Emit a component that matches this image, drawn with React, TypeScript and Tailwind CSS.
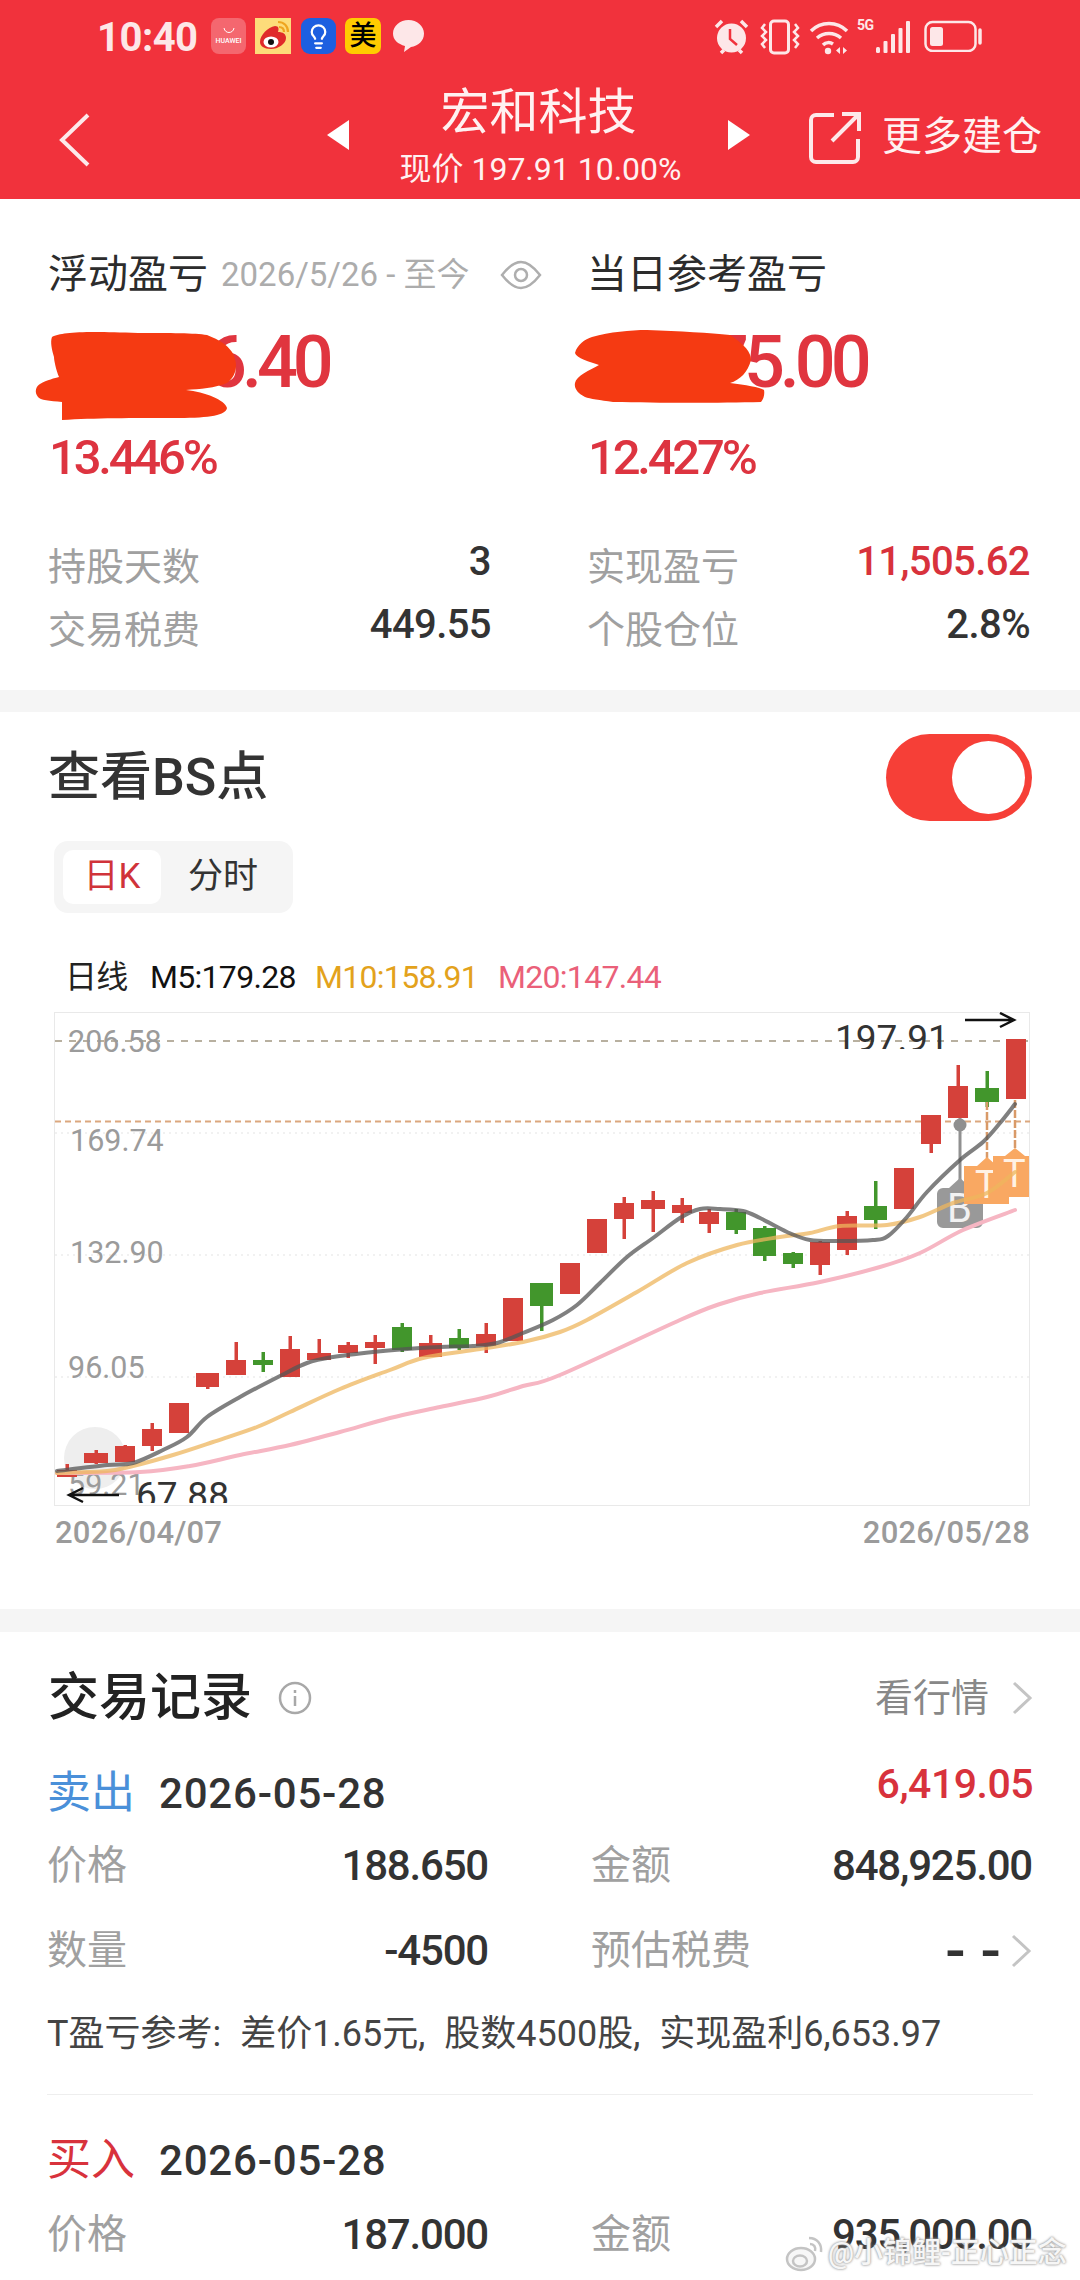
import { Lightbulb } from 'lucide-react'

type Candle = [number, number, number, number, number, number, 'r' | 'g']

// x1, x2, bodyTop, bodyBottom, wickTop, wickBottom, colour
const candles: Candle[] = [
  [57, 77, 1470, 1477, 1464, 1477, 'r'],
  [84, 108, 1453, 1463, 1450, 1464, 'r'],
  [115, 135, 1446, 1462, 1445, 1462, 'r'],
  [142, 162, 1429, 1446, 1423, 1451, 'r'],
  [169, 189, 1403, 1433, 1403, 1433, 'r'],
  [196, 219, 1373, 1387, 1373, 1389, 'r'],
  [226, 246, 1360, 1375, 1342, 1375, 'r'],
  [253, 273, 1360, 1365, 1352, 1372, 'g'],
  [280, 300, 1349, 1377, 1336, 1377, 'r'],
  [307, 331, 1353, 1360, 1339, 1360, 'r'],
  [338, 358, 1345, 1353, 1342, 1358, 'r'],
  [365, 385, 1342, 1348, 1335, 1364, 'r'],
  [392, 412, 1327, 1350, 1323, 1352, 'g'],
  [419, 442, 1343, 1357, 1335, 1357, 'r'],
  [449, 469, 1338, 1348, 1329, 1350, 'g'],
  [476, 496, 1334, 1346, 1323, 1353, 'r'],
  [503, 523, 1298, 1341, 1298, 1341, 'r'],
  [530, 553, 1283, 1306, 1283, 1331, 'g'],
  [560, 580, 1263, 1294, 1263, 1294, 'r'],
  [587, 607, 1219, 1253, 1219, 1253, 'r'],
  [614, 634, 1203, 1219, 1197, 1239, 'r'],
  [641, 665, 1200, 1209, 1191, 1232, 'r'],
  [672, 692, 1205, 1213, 1198, 1223, 'r'],
  [699, 719, 1212, 1224, 1209, 1233, 'r'],
  [726, 746, 1212, 1230, 1209, 1234, 'g'],
  [753, 776, 1228, 1256, 1226, 1261, 'g'],
  [783, 803, 1253, 1264, 1252, 1268, 'g'],
  [810, 830, 1242, 1265, 1241, 1275, 'r'],
  [837, 857, 1216, 1250, 1211, 1255, 'r'],
  [864, 887, 1206, 1220, 1181, 1229, 'g'],
  [894, 914, 1168, 1209, 1168, 1209, 'r'],
  [921, 941, 1115, 1144, 1115, 1153, 'r'],
  [948, 968, 1086, 1118, 1065, 1118, 'r'],
  [975, 999, 1088, 1102, 1071, 1107, 'g'],
  [1006, 1026, 1039, 1099, 1039, 1099, 'r'],
]

const m5 = [[57,1471],[107,1465],[133,1463],[163,1450],[187,1437],[207,1417],[240,1397],[280,1376],[307,1363],[333,1357],[373,1352],[407,1349],[440,1347],[473,1346],[497,1343],[523,1333],[553,1320],[577,1305],[600,1283],[627,1257],[653,1238],[680,1218],[700,1209],[720,1209],[743,1211],[760,1218],[787,1232],[810,1240],[840,1241],[873,1240],[888,1236],[907,1217],[927,1192],[960,1160],[983,1142],[1000,1123],[1015,1104]]
const m10 = [[57,1473],[107,1471],[133,1466],[173,1455],[213,1442],[257,1427],[290,1412],[340,1389],[390,1370],[423,1358],[473,1350],[523,1342],[560,1332],[587,1320],[637,1292],[687,1263],[737,1245],[780,1237],[810,1233],[840,1226],[887,1225],[920,1217],[953,1203],[987,1193],[1015,1172]]
const m20 = [[57,1473],[140,1472],[190,1466],[240,1455],[290,1445],[340,1432],[390,1418],[440,1407],[487,1397],[523,1386],[560,1375],[680,1320],[720,1304],[760,1293],[820,1282],[880,1267],[920,1253],[963,1230],[1015,1210]]

// catmull-rom to bezier so the averages stay smooth
function smooth(pts: number[][]) {
  let d = `M${pts[0][0]} ${pts[0][1]}`
  for (let i = 0; i < pts.length - 1; i++) {
    const p0 = pts[i - 1] ?? pts[i]
    const p1 = pts[i]
    const p2 = pts[i + 1]
    const p3 = pts[i + 2] ?? p2
    d += `C${p1[0] + (p2[0] - p0[0]) / 6} ${p1[1] + (p2[1] - p0[1]) / 6} ${p2[0] - (p3[0] - p1[0]) / 6} ${p2[1] - (p3[1] - p1[1]) / 6} ${p2[0]} ${p2[1]}`
  }
  return d
}

const chartFont = 'Roboto, sans-serif'

function Chart() {
  return (
    <svg viewBox="54 1012 976 494" className="block w-[976px] h-[494px] border-0">
      <rect x="54.5" y="1012.5" width="975" height="493" fill="#fff" stroke="#e9e9e9" />
      <line x1="55" x2="1030" y1="1041" y2="1041" stroke="#b8b0a0" strokeWidth="2" strokeDasharray="7 7" />
      <line x1="55" x2="1030" y1="1121.5" y2="1121.5" stroke="#dba77e" strokeWidth="2" strokeDasharray="6 4" />
      {[1133, 1255, 1377].map((y) => (
        <line key={y} x1="55" x2="1030" y1={y} y2={y} stroke="#f1f1f1" strokeWidth="2" strokeDasharray="2 4" />
      ))}
      <circle cx="95" cy="1458" r="31" fill="#eeeeee" />

      <g fontFamily={chartFont} fontSize="30.5" fill="#9b9b9b">
        <text x="68" y="1052">206.58</text>
        <text x="70" y="1151">169.74</text>
        <text x="70" y="1263">132.90</text>
        <text x="68" y="1378">96.05</text>
        <text x="68" y="1495">59.21</text>
      </g>

      {candles.map(([x1, x2, top, bottom, wt, wb, c], i) => {
        const fill = c === 'r' ? '#d5413a' : '#42962c'
        const cx = (x1 + x2) / 2
        return (
          <g key={i} fill={fill}>
            <rect x={cx - 1.5} y={wt} width="3.5" height={wb - wt} />
            <rect x={x1} y={top} width={x2 - x1} height={bottom - top} />
          </g>
        )
      })}

      <line x1="960" x2="960" y1="1118" y2="1180" stroke="#909090" strokeWidth="3" />
      <circle cx="960" cy="1125" r="6.5" fill="#8f8f8f" />
      <line x1="987" x2="987" y1="1102" y2="1158" stroke="#d99a68" strokeWidth="2.5" strokeDasharray="8 2" />
      <line x1="1015" x2="1015" y1="1100" y2="1150" stroke="#d99a68" strokeWidth="2.5" strokeDasharray="8 2" />

      <path d="M937 1194a6 6 0 0 1 6-6h6l11-10 11 10h6a6 6 0 0 1 6 6v28a6 6 0 0 1-6 6h-34a6 6 0 0 1-6-6z" fill="#999999" />
      <text x="947" y="1222" fontFamily={chartFont} fontSize="40" fill="#f2f2f2">B</text>
      <path d="M964 1166h13l10-9 10 9h12v38h-45z" fill="#f9a862" />
      <text x="975" y="1198" fontFamily={chartFont} fontSize="38" fill="#fff2e4">T</text>
      <path d="M993 1156h12l10-8 10 8h4v41h-36z" fill="#f9a862" />
      <text x="1003" y="1187" fontFamily={chartFont} fontSize="38" fill="#fff2e4">T</text>

      <path d={smooth(m20)} fill="none" stroke="#f6b6c3" strokeWidth="4" strokeLinecap="round" />
      <path d={smooth(m10)} fill="none" stroke="#eeb55e" strokeOpacity="0.75" strokeWidth="4" strokeLinecap="round" />
      <path d={smooth(m5)} fill="none" stroke="#555555" strokeOpacity="0.75" strokeWidth="4" strokeLinecap="round" />

      <defs>
        <clipPath id="top-clip"><rect x="830" y="1012" width="130" height="37" /></clipPath>
        <clipPath id="low-clip"><rect x="130" y="1460" width="110" height="43" /></clipPath>
      </defs>
      <g fontFamily={chartFont} fontSize="37" fill="#333333">
        <text x="835" y="1051" clipPath="url(#top-clip)">197.91</text>
        <text x="136" y="1508" clipPath="url(#low-clip)">67.88</text>
      </g>
      <path d="M965 1020h49M1000 1013l14 7-14 7" fill="none" stroke="#111" strokeWidth="2.5" />
      <path d="M119 1495H69M83 1488l-14 7 14 7" fill="none" stroke="#111" strokeWidth="2.5" />
    </svg>
  )
}

function StatusBar() {
  return (
    <div className="h-[66px] pt-[18px] flex items-start relative">
      <div className="ml-[97px] w-[114px] h-[40px] flex items-center text-[40px] font-bold text-[#fde7e8] tracking-[-0.5px]">10:40</div>
      <div className="w-[35px] h-[36px] rounded-[8px] bg-[#f4676f] flex flex-col items-center justify-center">
        <svg width="14" height="7" viewBox="0 0 14 7"><path d="M2 1c1 6 9 6 10 0" fill="none" stroke="#fff" strokeWidth="1" /></svg>
        <span className="text-[7px] leading-[9px] text-white mt-[3px] font-medium">HUAWEI</span>
      </div>
      <div className="ml-[9px] w-[36px] h-[36px] bg-[#fddc7a] flex items-center justify-center">
        <svg width="36" height="36" viewBox="0 0 36 36">
          <path d="M5 24c0-7 8-15 15-16 4 0 4 3 3 6 5 0 8 2 8 6 0 6-8 11-15 11-7 0-11-3-11-7z" fill="#e02a2a" />
          <ellipse cx="16" cy="24" rx="7.5" ry="5.5" fill="#fff" />
          <circle cx="16" cy="24" r="3" fill="#111" />
          <path d="M23 4c6 0 10 4 10 10M24 9c3 0 5 2 5 5" fill="none" stroke="#efa51f" strokeWidth="2.2" />
        </svg>
      </div>
      <div className="ml-[10px] w-[35px] h-[36px] rounded-[9px] bg-[#1d5fe0] flex items-center justify-center">
        <Lightbulb size={27} color="#ffffff" strokeWidth={2} />
      </div>
      <div className="ml-[9px] w-[36px] h-[36px] rounded-[7px] bg-[#ffcc00] flex items-center justify-center text-[27px] leading-none text-black font-medium">美</div>
      <svg className="ml-[10px]" width="35" height="36" viewBox="0 0 35 36">
        <path d="M17.5 2C26 2 33 8 33 15.5S27 28 20 29l-7 5 1-6C7 26 2 22 2 15.5 2 8 9 2 17.5 2z" fill="#fde7e8" />
      </svg>

      <div className="absolute left-[713px] top-[18px] flex items-start text-[#fde7e8]">
        <svg width="37" height="38" viewBox="0 0 37 38">
          <circle cx="18.5" cy="20" r="14.5" fill="#fde7e8" />
          <path d="M17 11v10l7 6" fill="none" stroke="#f1323c" strokeWidth="2.5" />
          <path d="M3 9l6-6M34 9l-6-6M8 35l3-3M29 35l-3-3" stroke="#fde7e8" strokeWidth="3.5" />
        </svg>
        <svg className="ml-[9px]" width="42" height="38" viewBox="0 0 42 38" fill="none" stroke="#fde7e8" strokeWidth="3">
          <rect x="11.5" y="3" width="18" height="32" rx="3.5" />
          <path d="M6 6l-3 4 4 4-4 4 4 4-4 4 3 4M36 6l3 4-4 4 4 4-4 4 4 4-3 4" strokeWidth="2.5" />
        </svg>
        <svg className="ml-[8px]" width="40" height="38" viewBox="0 0 40 38" fill="none" stroke="#fde7e8" strokeWidth="3.5">
          <path d="M2 13c10-10 26-10 36 0M8 20c7-6 17-6 24 0M14 27c3-3 7-3 10-1" />
          <circle cx="19" cy="33" r="3.2" fill="#fde7e8" stroke="none" />
          <path d="M31 29v7l-4-3.5zM34 29v7l4-3.5z" fill="#fde7e8" stroke="none" />
        </svg>
        <div className="ml-[8px] relative w-[55px] h-[38px]">
          <span className="absolute left-0 top-[0px] text-[14px] leading-[15px] font-bold text-[#fde7e8] tracking-[-0.5px]">5G</span>
          <svg className="absolute left-0 top-0" width="55" height="38" viewBox="0 0 55 38" fill="#fde7e8">
            <rect x="19" y="29" width="4" height="6" rx="1.5" />
            <rect x="26.5" y="23" width="4" height="12" rx="1" />
            <rect x="34" y="16" width="4" height="19" rx="1" />
            <rect x="41.5" y="10" width="4" height="25" rx="1" />
            <rect x="49" y="3" width="4" height="32" rx="1" />
          </svg>
        </div>
        <svg className="ml-[12px]" width="59" height="34" viewBox="0 0 59 34" fill="none" stroke="#fde7e8" strokeWidth="2.5" >
          <rect x="1.5" y="4" width="50" height="29" rx="7" />
          <rect x="6" y="9" width="13" height="19" rx="2.5" fill="#fde7e8" stroke="none" />
          <path d="M56 12v13" strokeWidth="3.5" strokeLinecap="round" />
        </svg>
      </div>
    </div>
  )
}

function NavBar() {
  return (
    <div className="h-[133px] relative">
      <svg className="absolute left-[56px] top-[47px]" width="36" height="54" viewBox="0 0 36 54">
        <path d="M32 2L6 27l26 25" fill="none" stroke="#fde9ea" strokeWidth="4" />
      </svg>
      <svg className="absolute left-[326px] top-[54px]" width="24" height="30" viewBox="0 0 24 30"><path d="M23 0v30L1 15z" fill="#fff" /></svg>
      <div className="flex flex-col items-center text-[#fff1f1]">
        <div className="text-[49px] leading-[60px] h-[60px] mr-[3px] mt-[17px]">宏和科技</div>
        <div className="text-[32px] leading-[36px] mt-[8px] ml-[1px]">现价 197.91 10.00%</div>
      </div>
      <svg className="absolute left-[727px] top-[54px]" width="24" height="30" viewBox="0 0 24 30"><path d="M1 0v30l22-15z" fill="#fff" /></svg>
      <svg className="absolute left-[808px] top-[45px]" width="54" height="54" viewBox="0 0 54 54" fill="none" stroke="#fde9ea" strokeWidth="4">
        <path d="M26 4H8a5 5 0 0 0-5 5v37a5 5 0 0 0 5 5h37a5 5 0 0 0 5-5V28M24 30L50 4M34 3h17v17" />
      </svg>
      <div className="absolute left-[882px] top-[46px] text-[40px] leading-[50px] text-[#fff1f1]">更多建仓</div>
    </div>
  )
}

function Stat({ label, value, red }: { label: string; value: string; red?: boolean }) {
  return (
    <div className="flex items-center justify-between w-[443px] h-[63px]">
      <span className="text-[38px] text-[#a0a0a0] leading-[48px]">{label}</span>
      <span className={`text-[40px] font-medium leading-[48px] mb-[10px] tracking-[-0.6px] ${red ? 'text-[#d8323c]' : 'text-[#333333]'}`}>{value}</span>
    </div>
  )
}

function Big({ value, pad, pct }: { value: string; pad: string; pct: string }) {
  return (
    <>
      <div className={`mt-[23px] h-[80px] text-[72px] leading-[80px] font-medium text-[#e0353f] tracking-[-5px] ${pad}`}>{value}</div>
      <div className="mt-[30px] h-[50px] text-[49px] leading-[50px] font-medium text-[#dd3440] ml-[1px] tracking-[-3.2px]">{pct}</div>
    </>
  )
}

function Summary() {
  return (
    <section className="relative bg-white h-[491px] px-[48px] pt-[51px] flex">
      <div className="w-[539px] shrink-0">
        <div className="h-[50px] flex items-center whitespace-nowrap">
          <span className="text-[40px] text-[#2c2c2c]">浮动盈亏</span>
          <span className="ml-[13px] text-[33px] text-[#acacac]">2026/5/26 - 至今</span>
          <svg className="ml-[30px]" width="42" height="30" viewBox="0 0 42 30" fill="none" stroke="#aeaeae" strokeWidth="2.5">
            <path d="M2 15C9 6 15 2 21 2s12 4 19 13c-7 9-13 13-19 13S9 24 2 15z" />
            <circle cx="21" cy="15" r="6" />
          </svg>
        </div>
        <Big value="6.40" pad="pl-[158px]" pct="13.446%" />
        <div className="mt-[52px]">
          <Stat label="持股天数" value="3" />
          <Stat label="交易税费" value="449.55" />
        </div>
      </div>
      <div className="w-[443px] shrink-0">
        <div className="h-[50px] flex items-center text-[40px] text-[#2c2c2c]">当日参考盈亏</div>
        <Big value="75.00" pad="pl-[121px]" pct="12.427%" />
        <div className="mt-[52px]">
          <Stat label="实现盈亏" value="11,505.62" red />
          <Stat label="个股仓位" value="2.8%" />
        </div>
      </div>
      {/* redaction scribbles painted on the screenshot */}
      <svg className="absolute left-0 top-[-199px] pointer-events-none" width="1080" height="700" viewBox="0 0 1080 700" fill="#f53a12">
        <path d="M52 337C62 332 83 331 138 333C170 333 195 333 207 335C220 340 227 345 232 352C238 362 238 375 227 383C215 388 200 389 186 390C205 392 225 400 227 408C226 415 210 418 179 418C130 418 95 418 62 420L62 402C50 401 40 400 38 397C34 392 36 386 40 384C47 380 55 378 59 377C56 370 54 360 54 357C52 350 50 342 52 337Z" />
        <path d="M575 353C577 345 585 339 592 337C610 332 630 330 647 330C680 331 710 333 730 335C745 345 751 352 751 360C748 372 740 380 730 383C745 385 760 387 764 390C765 395 763 400 761 402C720 403 660 403 613 402C600 400 590 399 585 397C577 393 574 388 575 383C576 376 590 370 599 365C590 362 576 358 575 353Z" />
      </svg>
    </section>
  )
}

function BsSection() {
  return (
    <section className="bg-white h-[897px] px-[48px] pt-[22px]">
      <div className="flex items-center justify-between h-[87px]">
        <span className="text-[52px] font-medium text-[#333333]">查看BS点</span>
        <div className="w-[146px] h-[87px] rounded-full bg-[#f63f37] flex items-center justify-end pr-[7px]">
          <div className="w-[73px] h-[73px] rounded-full bg-white" />
        </div>
      </div>
      <div className="mt-[20px] ml-[6px] w-[239px] h-[72px] rounded-[14px] bg-[#f5f5f5] flex items-center pl-[9px]">
        <div className="w-[98px] h-[54px] rounded-[10px] bg-white flex items-center justify-center text-[35px] text-[#d0333a]">日K</div>
        <div className="ml-[27px] text-[35px] text-[#333333]">分时</div>
      </div>
      <div className="mt-[44px] ml-[17px] h-[40px] flex items-center text-[32px] tracking-[-0.7px] whitespace-nowrap">
        <span className="w-[85px] text-[#222222]">日线</span>
        <span className="w-[165px] text-[#111111]">M5:179.28</span>
        <span className="w-[183px] text-[#e3a21c]">M10:158.91</span>
        <span className="text-[#ea6079]">M20:147.44</span>
      </div>
      <div className="mt-[15px] ml-[6px]">
        <Chart />
      </div>
      <div className="mt-[10px] ml-[7px] w-[975px] h-[34px] flex items-center justify-between text-[31px] font-medium text-[#9b9b9b] tracking-[0.2px]">
        <span>2026/04/07</span>
        <span>2026/05/28</span>
      </div>
    </section>
  )
}

function Chevron({ className }: { className?: string }) {
  return (
    <svg className={className} width="22" height="34" viewBox="0 0 22 34">
      <path d="M3 2l16 15L3 32" fill="none" stroke="#c4c4c4" strokeWidth="3" />
    </svg>
  )
}

function Row({ label, value, label2, value2, arrow }: { label: string; value: string; label2: string; value2: string; arrow?: boolean }) {
  return (
    <div className="h-[85px] flex items-center text-[40px] leading-[50px]">
      <div className="w-[441px] flex justify-between">
        <span className="text-[#a0a0a0]">{label}</span>
        <span className="text-[#333333] font-medium text-[42px] tracking-[-1.2px]">{value}</span>
      </div>
      <div className="ml-[103px] w-[441px] flex justify-between items-center">
        <span className="text-[#a0a0a0]">{label2}</span>
        {arrow ? (
          <span className="text-[#333333] font-medium flex items-center">
            <span className="text-[60px] tracking-[15px] mr-[-15px]">{value2}</span>
            <Chevron className="ml-[9px]" />
          </span>
        ) : (
          <span className="text-[#333333] font-medium text-[42px] tracking-[-1.2px]">{value2}</span>
        )}
      </div>
    </div>
  )
}

function Trades() {
  return (
    <section className="bg-white flex-1 px-[47px] pt-[36px] overflow-hidden">
      <div className="h-[60px] flex items-center">
        <span className="text-[51px] text-[#222222] font-medium ml-[1px]">交易记录</span>
        <svg className="ml-[26px]" width="34" height="34" viewBox="0 0 34 34" fill="none" stroke="#a8a8a8" strokeWidth="2.5">
          <circle cx="17" cy="17" r="15" />
          <path d="M17 15v10M17 9v3" />
        </svg>
        <span className="ml-auto text-[38px] text-[#888888]">看行情</span>
        <Chevron className="ml-[22px]" />
      </div>
      <div className="mt-[39px] h-[52px] flex items-center">
        <span className="text-[44px] text-[#4a90d9]">卖出</span>
        <span className="ml-[24px] text-[42px] font-medium text-[#333333] tracking-[0.8px]">2026-05-28</span>
        <span className="ml-auto mb-[16px] text-[41px] font-medium text-[#d8323c] tracking-[-0.5px]">6,419.05</span>
      </div>
      <div className="mt-[4px]">
        <Row label="价格" value="188.650" label2="金额" value2="848,925.00" />
        <Row label="数量" value="-4500" label2="预估税费" value2="--" arrow />
      </div>
      <div className="mt-[19px] h-[44px] leading-[44px] text-[36px] text-[#444444] whitespace-nowrap [word-spacing:10px]">T盈亏参考: 差价1.65元, 股数4500股, 实现盈利6,653.97</div>
      <div className="mt-[38px] h-px bg-[#eeeeee]" />
      <div className="mt-[39px] h-[52px] flex items-center">
        <span className="text-[44px] text-[#d8323c]">买入</span>
        <span className="ml-[24px] text-[42px] font-medium text-[#333333] tracking-[0.8px]">2026-05-28</span>
      </div>
      <div className="mt-[6px]">
        <Row label="价格" value="187.000" label2="金额" value2="935,000.00" />
      </div>
    </section>
  )
}

function Watermark() {
  return (
    <div className="absolute left-[785px] top-[2232px] flex items-center">
      <svg width="40" height="38" viewBox="0 0 40 38" fill="none" stroke="#c4c4c4" strokeWidth="2.5">
        <ellipse cx="16" cy="24" rx="14" ry="11" fill="#f7f7f7" />
        <ellipse cx="15" cy="26" rx="7" ry="5.5" />
        <path d="M24 3c8 0 13 6 12 14M25 9c4 0 6 3 5 7" />
      </svg>
      <span className="ml-[3px] text-[29px] font-medium text-[#f6f6f6] whitespace-nowrap [text-shadow:0_0_3px_#9a9a9a,0_0_2px_#b0b0b0]">@小锦鲤-正心正念</span>
    </div>
  )
}

export default function App() {
  return (
    <div className="relative w-[1080px] h-[2280px] overflow-hidden flex flex-col bg-[#f5f5f5] [font-family:Roboto,'Noto_Sans_CJK_SC',sans-serif]">
      <header className="bg-[#f1323c] h-[199px] shrink-0">
        <StatusBar />
        <NavBar />
      </header>
      <Summary />
      <div className="h-[22px] shrink-0" />
      <BsSection />
      <div className="h-[23px] shrink-0" />
      <Trades />
      <Watermark />
    </div>
  )
}
